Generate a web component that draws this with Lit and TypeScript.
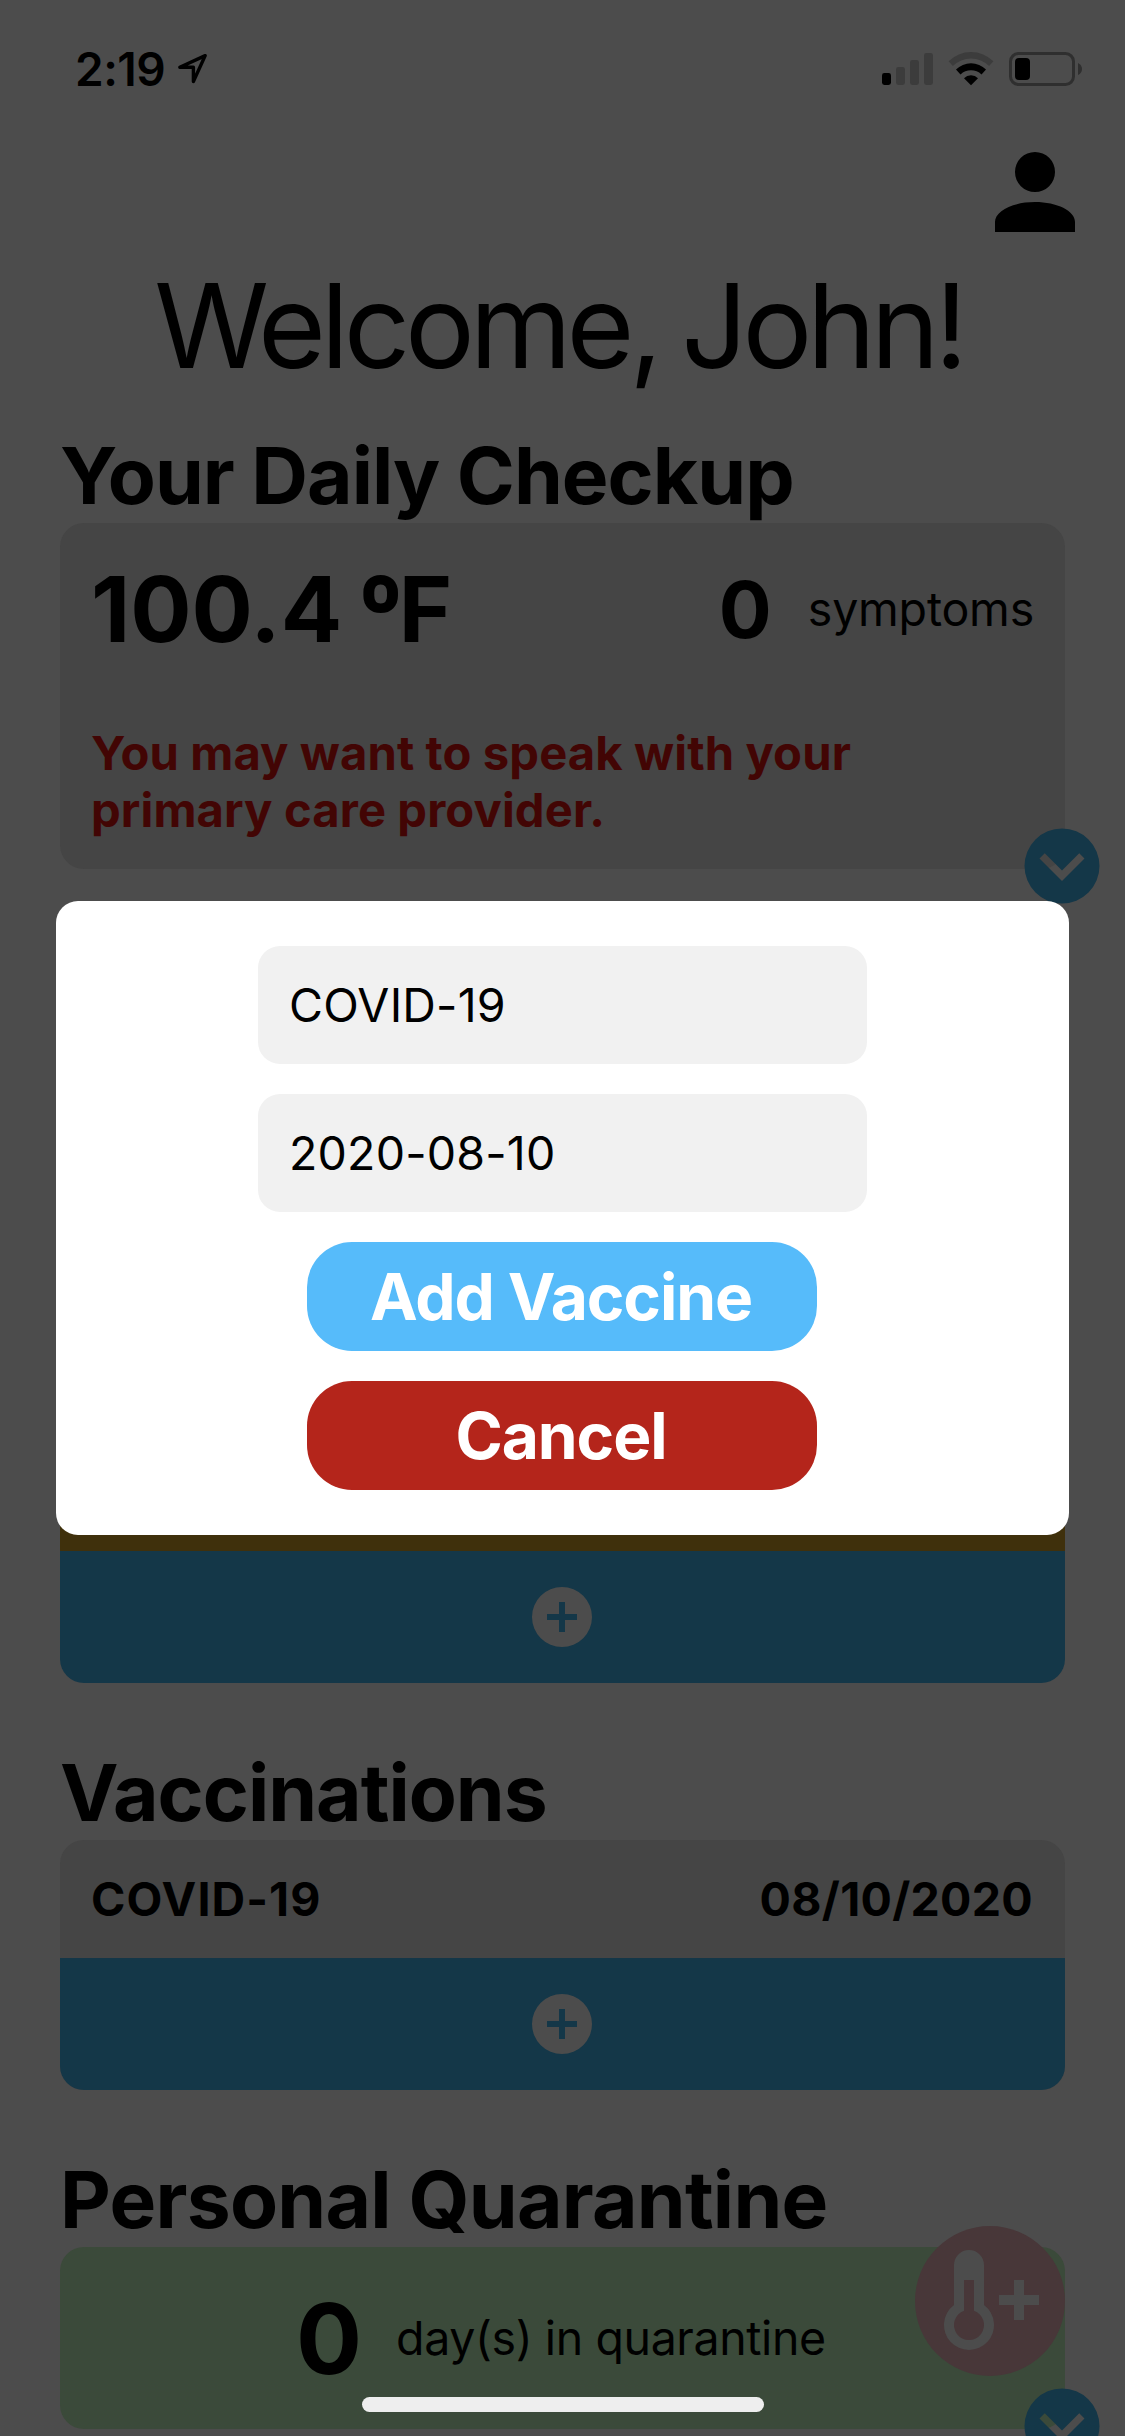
import { LitElement, html, css, svg } from "lit";
import { customElement, property } from "lit/decorators.js";

const PLUS_CIRCLE =
  "M17 13h-4v4h-2v-4H7v-2h4V7h2v4h4m-5-9A10 10 0 0 0 2 12a10 10 0 0 0 10 10 10 10 0 0 0 10-10A10 10 0 0 0 12 2z";
const CHEVRON_CIRCLE =
  "M22 12A10 10 0 0 1 12 22 10 10 0 0 1 2 12 10 10 0 0 1 12 2 10 10 0 0 1 22 12M6 10l6 6 6-6-1.4-1.4L12 13.2 7.4 8.6 6 10z";
const ACCOUNT =
  "M12 4a4 4 0 0 1 4 4 4 4 0 0 1-4 4 4 4 0 0 1-4-4 4 4 0 0 1 4-4m0 10c4.42 0 8 1.79 8 4v2H4v-2c0-2.21 3.58-4 8-4z";
const THERMOMETER_PLUS =
  "M5 13V5a3 3 0 0 1 6 0v8a5 5 0 1 1-6 0zM7 8v6.17a3 3 0 1 0 2 0V8zM17 8h2v3h3v2h-3v3h-2v-3h-3v-2h3z";

@customElement("app-icon")
export class AppIcon extends LitElement {
  @property() path = "";
  static styles = css`
    :host { display: block; }
    .glyph { display: block; width: 100%; height: 100%; fill: currentColor; fill-rule: evenodd; }
  `;
  render() {
    return html`<svg class="glyph" viewBox="0 0 24 24"><path d=${this.path}></path></svg>`;
  }
}

@customElement("status-bar")
export class StatusBar extends LitElement {
  static styles = css`
    :host {
      display: flex;
      justify-content: space-between;
      height: 132px;
      padding: 0 40px 0 75px;
      box-sizing: border-box;
    }
    .left, .right { display: flex; align-items: flex-start; }
    .time { font-size: 46px; font-weight: 600; line-height: 56px; letter-spacing: -0.5px; margin-top: 41px; }
    .arrow { width: 32px; height: 34px; margin: 53px 0 0 12px; }
    .right svg { display: block; height: 40px; margin-top: 50px; }
    .bars { width: 54px; }
    .wifi { width: 46px; margin-left: 12px; }
    .battery { width: 76px; margin-left: 15px; }
  `;
  render() {
    const bars = [
      { h: 12, on: true },
      { h: 18, on: false },
      { h: 25, on: false },
      { h: 32, on: false },
    ];
    return html`
      <div class="left">
        <span class="time">2:19</span>
        <svg class="arrow" viewBox="0 0 32 34">
          <path d="M28.2 2.6 L2.8 14.2 H16.4 V28.5 Z" fill="none" stroke="#000" stroke-width="3.4" stroke-linejoin="round"/>
        </svg>
      </div>
      <div class="right">
        <svg class="bars" viewBox="0 0 54 40">
          ${bars.map(
            (b, i) => svg`<rect x=${i * 14} y=${35 - b.h} width="9" height=${b.h} rx="2.4" fill=${b.on ? "#000" : "#3c3c3c"}></rect>`
          )}
        </svg>
        <svg class="wifi" viewBox="0 0 46 40">
          <path d="M0.6 11.2 A32 32 0 0 1 45.4 11.2 L41.1 16 A25.5 25.5 0 0 0 4.9 16 Z" fill="#3c3c3c"/>
          <path d="M8 19.6 A21 21 0 0 1 38 19.6 L33.5 24.4 A15.5 15.5 0 0 0 12.5 24.4 Z" fill="#000"/>
          <path d="M16 28.2 A10 10 0 0 1 30 28.2 L23 35.2 Z" fill="#000"/>
        </svg>
        <svg class="battery" viewBox="0 0 76 40">
          <rect x="1.5" y="3.5" width="63" height="31" rx="8" fill="none" stroke="#2f2f2f" stroke-width="3"/>
          <rect x="6" y="8" width="15" height="22" rx="4" fill="#000"/>
          <path d="M69 13 Q73 15 73 19 Q73 23 69 25 Z" fill="#2f2f2f"/>
        </svg>
      </div>
    `;
  }
}

@customElement("app-root")
export class AppRoot extends LitElement {
  static styles = css`
    :host {
      display: block;
      position: relative;
      width: 1125px;
      height: 2436px;
      overflow: hidden;
      background: #4c4c4c;
      color: #000;
      font-family: Inter, "Liberation Sans", sans-serif;
    }
    .top { display: flex; justify-content: flex-end; height: 120px; padding-right: 30px; }
    .account { width: 120px; height: 120px; }
    .welcome {
      margin: 4px 0 0;
      padding-right: 8px;
      height: 140px;
      line-height: 139px;
      font-size: 116.5px;
      font-weight: 400;
      letter-spacing: -5.2px;
      word-spacing: -4px;
      text-align: center;
      white-space: nowrap;
    }
    .page { padding: 0 60px; }
    .heading {
      margin: 0;
      height: 96px;
      line-height: 98px;
      font-size: 78.5px;
      font-weight: 700;
      letter-spacing: -1px;
      white-space: nowrap;
    }
    .wide { letter-spacing: -0.75px; }
    .checkup { margin-top: 31px; }
    .card { position: relative; border-radius: 24px; background: #454545; }
    .checkup-card { height: 346px; box-sizing: border-box; padding: 30px 31px; }
    .reading { display: flex; align-items: center; justify-content: space-between; height: 112px; white-space: nowrap; }
    .temp { font-size: 91px; font-weight: 700; word-spacing: -5px; }
    .unit { letter-spacing: -4px; }
    .degree { -webkit-text-stroke: 3px #000; }
    .count { display: flex; align-items: center; }
    .count-number { font-size: 78.5px; font-weight: 700; }
    .label { font-size: 46.5px; }
    .count .label { margin-left: 36px; letter-spacing: -0.2px; }
    .advice { margin: 59px 0 0; width: 820px; font-size: 47.2px; line-height: 57px; font-weight: 700; letter-spacing: 0.1px; color: #420504; }
    .expander { position: absolute; right: -42px; bottom: -42px; width: 90px; height: 90px; color: #143748; }
    .tests { height: 814px; display: flex; flex-direction: column; justify-content: flex-end; }
    .warn { height: 118px; background: #3f300c; }
    .add { display: flex; align-items: center; justify-content: center; height: 132px; padding-right: 1px; border-radius: 0 0 24px 24px; background: #143748; }
    .add-icon { width: 72px; height: 72px; color: #4c4c4c; }
    .section { margin-top: 61px; }
    .record { display: flex; align-items: center; justify-content: space-between; height: 118px; padding: 0 32px 0 31px; font-size: 46.5px; font-weight: 700; }
    .record-name { letter-spacing: 1.1px; }
    .record-date { letter-spacing: 0.3px; }
    .quarantine { display: flex; align-items: center; height: 182px; padding-left: 236px; background: #3b4a3a; white-space: nowrap; }
    .days { font-size: 98px; font-weight: 700; }
    .quarantine .label { margin-left: 34px; letter-spacing: -0.4px; }
    .fab {
      position: absolute; left: 915px; top: 2226px; width: 150px; height: 150px;
      border-radius: 50%; background: #483739; color: #4c4c4c;
      display: flex; align-items: center; justify-content: center;
    }
    .fab-icon { width: 120px; height: 120px; margin: 0 2px 2px 0; }
    .home { position: absolute; left: 362px; top: 2397px; width: 402px; height: 15px; border-radius: 8px; background: #eee; }
    .modal {
      position: absolute; left: 56px; top: 901px; width: 1013px; height: 634px;
      box-sizing: border-box; padding: 45px 0; border-radius: 22px; background: #fff;
      display: flex; flex-direction: column; align-items: center; gap: 30px;
    }
    .field {
      width: 609px; height: 118px; box-sizing: border-box; padding: 0 31px; border-radius: 22px;
      background: #f1f1f1; display: flex; align-items: center; font-size: 46.5px; letter-spacing: 0.2px;
    }
    .button {
      width: 510px; height: 109px; margin-right: 1px; border-radius: 45px; border: 0; padding: 0 2px 0 0; color: #fff;
      font-family: inherit; font-size: 64px; font-weight: 700; line-height: 109px; letter-spacing: -1.1px;
    }
    .primary { background: #56bbfa; }
    .danger { background: #b4251b; }
  `;

  private addRow() {
    return html`<div class="add"><app-icon class="add-icon" .path=${PLUS_CIRCLE}></app-icon></div>`;
  }

  render() {
    return html`
      <status-bar></status-bar>
      <div class="top"><app-icon class="account" .path=${ACCOUNT}></app-icon></div>
      <h1 class="welcome">Welcome, John!</h1>
      <main class="page">
        <h2 class="heading checkup">Your Daily Checkup</h2>
        <section class="card checkup-card">
          <div class="reading">
            <span class="temp">100.4 <span class="unit"><span class="degree">º</span>F</span></span>
            <div class="count"><span class="count-number">0</span><span class="label">symptoms</span></div>
          </div>
          <p class="advice">You may want to speak with your primary care provider.</p>
          <app-icon class="expander" .path=${CHEVRON_CIRCLE}></app-icon>
        </section>
        <section class="tests"><div class="warn"></div>${this.addRow()}</section>
        <h2 class="heading section">Vaccinations</h2>
        <section class="card">
          <div class="record"><span class="record-name">COVID-19</span><span class="record-date">08/10/2020</span></div>
          ${this.addRow()}
        </section>
        <h2 class="heading section wide">Personal Quarantine</h2>
        <section class="card quarantine">
          <span class="days">0</span><span class="label">day(s) in quarantine</span>
          <app-icon class="expander" .path=${CHEVRON_CIRCLE}></app-icon>
        </section>
      </main>
      <div class="fab"><app-icon class="fab-icon" .path=${THERMOMETER_PLUS}></app-icon></div>
      <div class="home"></div>
      <div class="modal" role="dialog">
        <div class="field">COVID-19</div>
        <div class="field">2020-08-10</div>
        <button class="button primary">Add Vaccine</button>
        <button class="button danger">Cancel</button>
      </div>
    `;
  }
}
